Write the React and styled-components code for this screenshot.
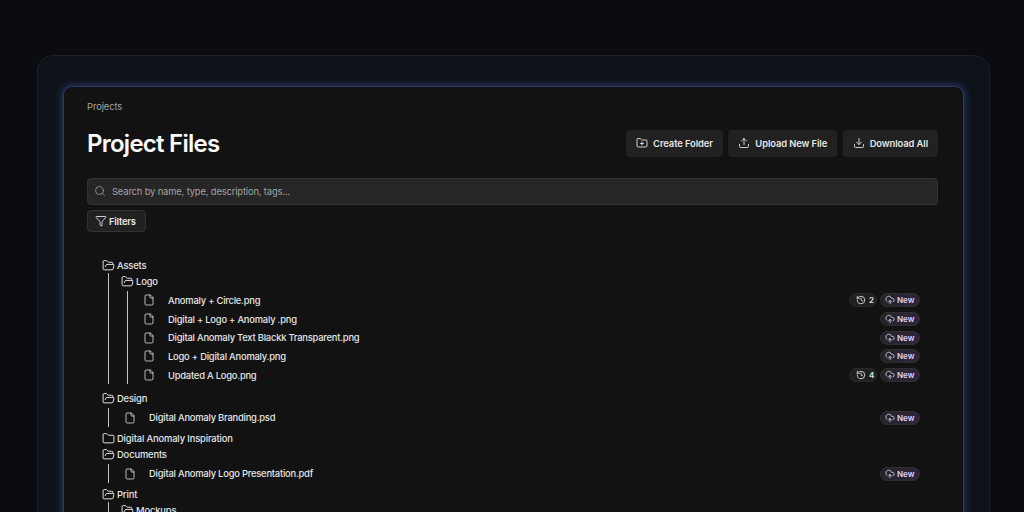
import React from 'react';
import styled, { createGlobalStyle } from 'styled-components';
import {
  CloudUpload,
  Download,
  File,
  Folder,
  FolderOpen,
  FolderPlus,
  Funnel,
  History,
  Search,
  Upload,
} from 'lucide-react';

const GlobalStyle = createGlobalStyle`
  html, body {
    margin: 0;
    height: 512px;
    overflow: hidden;
    background: #0a0c11;
    font-family: Inter, "Liberation Sans", sans-serif;
    -webkit-font-smoothing: antialiased;
  }
`;

const tree = [
  {
    name: 'Assets',
    children: [
      {
        name: 'Logo',
        children: [
          { file: 'Anomaly + Circle.png', versions: 2 },
          { file: 'Digital + Logo + Anomaly .png' },
          { file: 'Digital Anomaly Text Blackk Transparent.png' },
          { file: 'Logo + Digital Anomaly.png' },
          { file: 'Updated A Logo.png', versions: 4 },
        ],
      },
    ],
  },
  { name: 'Design', children: [{ file: 'Digital Anomaly Branding.psd' }] },
  { name: 'Digital Anomaly Inspiration' },
  { name: 'Documents', children: [{ file: 'Digital Anomaly Logo Presentation.pdf' }] },
  {
    name: 'Print',
    children: [{ name: 'Mockups' }],
  },
];

function FileRow({ node }) {
  return (
    <FileLine>
      <File size={12} strokeWidth={1.7} color="#d4d4d4" />
      <FileName>{node.file}</FileName>
      <Badges>
        {node.versions && (
          <VersionBadge>
            <History size={10} strokeWidth={2} />
            {node.versions}
          </VersionBadge>
        )}
        <NewBadge>
          <CloudUpload size={10} strokeWidth={2} />
          New
        </NewBadge>
      </Badges>
    </FileLine>
  );
}

function FolderNode({ node }) {
  const hasChildren = node.children?.length > 0;
  const Icon = hasChildren || node.name === 'Mockups' ? FolderOpen : Folder;
  const holdsFolders = hasChildren && !node.children[0].file;
  return (
    <div>
      <FolderLine>
        <Icon size={13} strokeWidth={1.8} color="#e5e5e5" />
        {node.name}
      </FolderLine>
      {hasChildren && (
        <Children $holdsFolders={holdsFolders}>
          {node.children.map((child) =>
            child.file ? (
              <FileRow key={child.file} node={child} />
            ) : (
              <FolderNode key={child.name} node={child} />
            ),
          )}
        </Children>
      )}
    </div>
  );
}

export default function App() {
  return (
    <>
      <GlobalStyle />
      <Page>
        <Frame>
          <Panel>
            <Crumb>Projects</Crumb>
            <Header>
              <Title>Project Files</Title>
              <Actions>
                <ActionButton>
                  <FolderPlus size={12} strokeWidth={1.75} />
                  Create Folder
                </ActionButton>
                <ActionButton>
                  <Upload size={12} strokeWidth={1.75} />
                  Upload New File
                </ActionButton>
                <ActionButton>
                  <Download size={12} strokeWidth={1.75} />
                  Download All
                </ActionButton>
              </Actions>
            </Header>
            <SearchBox>
              <SearchIcon size={12} strokeWidth={1.5} color="#a3a3a3" />
              <span>Search by name, type, description, tags...</span>
            </SearchBox>
            <FilterButton>
              <Funnel size={12} strokeWidth={1.75} />
              Filters
            </FilterButton>
            <Tree>
              {tree.map((node) => (
                <FolderNode key={node.name} node={node} />
              ))}
            </Tree>
          </Panel>
        </Frame>
      </Page>
    </>
  );
}

const Page = styled.div`
  padding: 55px 34px 0 37px;
`;

const Frame = styled.div`
  box-sizing: border-box;
  height: 600px;
  padding: 31px 26px 0;
  background: #0d1118;
  border: 1px solid #1c1f26;
  border-radius: 16px;
`;

const Panel = styled.div`
  box-sizing: border-box;
  height: 560px;
  padding: 14px 25px 0 23px;
  background: #121212;
  border-radius: 8px;
  box-shadow: 0 0 1px 1px #2c3c63, 0 0 7px 3px rgba(52, 78, 140, 0.55);
`;

const Crumb = styled.div`
  font-size: 9.4px;
  line-height: 12px;
  letter-spacing: -0.1px;
  color: #a3a3a3;
`;

const Header = styled.div`
  display: flex;
  justify-content: space-between;
  align-items: center;
  margin-top: 14px;
`;

const Title = styled.h1`
  margin: 1px 0 -1px;
  font-size: 24px;
  line-height: 32px;
  font-weight: 600;
  letter-spacing: -0.75px;
  color: #fafafa;
`;

const Actions = styled.div`
  display: flex;
  gap: 5.5px;
`;

const ActionButton = styled.div`
  display: flex;
  align-items: center;
  gap: 5px;
  height: 27px;
  padding: 0 10px;
  background: #212121;
  border-radius: 4px;
  font-size: 9.4px;
  font-weight: 600;
  letter-spacing: -0.1px;
  color: #e5e5e5;
`;

const SearchBox = styled.div`
  box-sizing: border-box;
  display: flex;
  align-items: center;
  gap: 6px;
  height: 27px;
  margin-top: 19px;
  padding: 0 6px;
  background: #262626;
  border: 1px solid #333333;
  border-radius: 4px;
  font-size: 9.4px;
  letter-spacing: -0.15px;
  color: #a3a3a3;
`;

const SearchIcon = styled(Search)`
  margin-top: -2px;
`;

const FilterButton = styled.div`
  box-sizing: border-box;
  display: inline-flex;
  align-items: center;
  gap: 2px;
  height: 22px;
  margin-top: 5px;
  padding: 0 9px 0 7px;
  background: #212121;
  border: 1px solid #333333;
  border-radius: 4px;
  font-size: 9.4px;
  font-weight: 600;
  letter-spacing: -0.2px;
  color: #e5e5e5;
`;

const Tree = styled.div`
  margin-top: 25px;
  padding: 0 18px 0 15px;
`;

const FolderLine = styled.div`
  display: flex;
  align-items: center;
  gap: 2px;
  height: 16px;
  font-size: 9.4px;
  font-weight: 500;
  letter-spacing: -0.15px;
  color: #e5e5e5;
`;

const Children = styled.div`
  margin: ${(props) => (props.$holdsFolders ? '0 0 5.8px 6px' : '2px 0 3.4px 6px')};
  padding-left: 12px;
  border-left: 1px solid #c4c4c4;
`;

const FileLine = styled.div`
  display: flex;
  align-items: center;
  gap: 13px;
  height: 18.7px;
  padding-left: 3px;
`;

const FileName = styled.span`
  font-size: 9.4px;
  font-weight: 500;
  letter-spacing: -0.22px;
  color: #e5e5e5;
`;

const Badges = styled.div`
  display: flex;
  gap: 3px;
  margin-left: auto;
`;

const Badge = styled.div`
  box-sizing: border-box;
  display: flex;
  align-items: center;
  height: 14px;
  border-radius: 7px;
  font-size: 8px;
  font-weight: 600;
  color: #e5e5e5;
`;

const VersionBadge = styled(Badge)`
  gap: 3px;
  width: 28px;
  padding-left: 6px;
  background: #1f1f1f;
  border: 1px solid #2a2a2a;
`;

const NewBadge = styled(Badge)`
  gap: 2px;
  width: 40px;
  padding-left: 4px;
  color: #ddd6fe;
  background: linear-gradient(90deg, #242424, #2f2440);
  border: 1px solid #2e2e2e;
`;
